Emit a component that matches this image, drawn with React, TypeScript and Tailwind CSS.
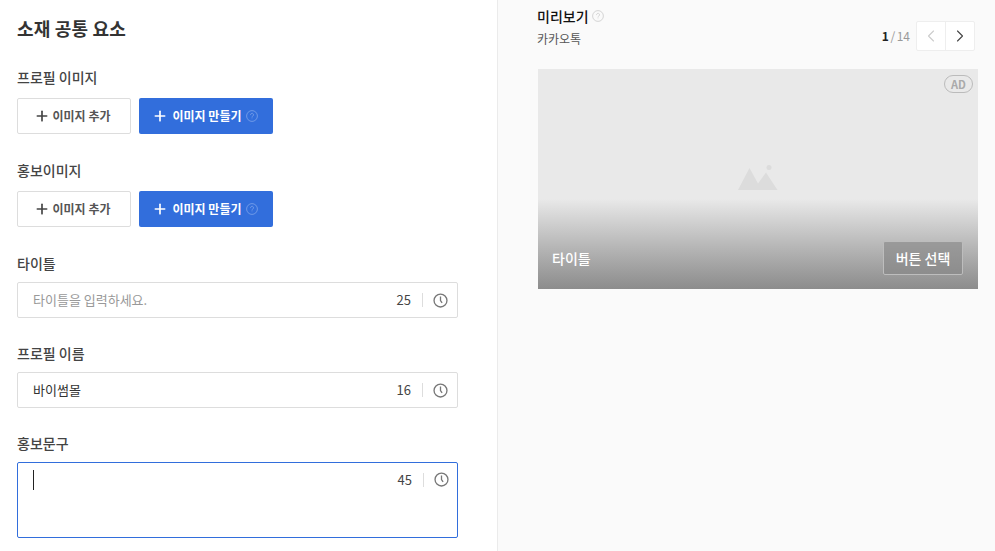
import { ChevronLeft, ChevronRight, Plus } from "lucide-react";

const fontStack = { fontFamily: '"Noto Sans CJK KR", "Noto Sans", sans-serif' };

function HelpIcon({ className }: { className?: string }) {
  return (
    <svg viewBox="0 0 12 12" className={className} fill="none" stroke="currentColor" strokeWidth="0.8">
      <circle cx="6" cy="6" r="5.4" />
      <path d="M4.5 4.7a1.5 1.5 0 1 1 2.3 1.3c-.5.3-.8.6-.8 1.2" strokeLinecap="round" />
      <circle cx="6" cy="8.8" r="0.4" fill="currentColor" stroke="none" />
    </svg>
  );
}

function ClockIcon() {
  return (
    <svg viewBox="0 0 16 16" className="h-[15px] w-[15px] text-[#777]" fill="none" stroke="currentColor" strokeWidth="1.4">
      <circle cx="8" cy="8" r="6.9" />
      <path d="M8 3.6V8l1.7 2.6" />
    </svg>
  );
}

function ImageButtons() {
  return (
    <div className="flex gap-2">
      <button className="flex h-9 w-[114px] items-center justify-center gap-[3px] rounded-[2px] border border-[#ddd] bg-white pr-[4px] text-[12px] font-bold text-[#555]">
        <Plus className="h-4 w-4 text-[#444]" strokeWidth={2.5} />
        이미지 추가
      </button>
      <button className="flex h-9 w-[134px] items-center justify-center gap-[5px] rounded-[2px] bg-[#326edc] pr-[2px] text-[12px] font-bold text-white">
        <Plus className="h-4 w-4" strokeWidth={2.5} />
        이미지 만들기
        <HelpIcon className="h-3 w-3 text-[#7fa5ea]" />
      </button>
    </div>
  );
}

function Counter({ value }: { value: number }) {
  return (
    <div className="flex items-center">
      <span className="text-[13px] text-[#444]">{value}</span>
      <span className="ml-[11px] mr-[10px] h-[14px] w-px bg-[#ddd]" />
      <ClockIcon />
    </div>
  );
}

export default function App() {
  return (
    <div className="flex h-[551px] w-[995px] overflow-hidden bg-white" style={fontStack}>
      <div className="w-[498px] shrink-0 border-r border-[#ebebeb] pl-[17px] pr-[39px]">
        <h2 className="pt-[15px] text-[18px] font-bold leading-[26px] tracking-[0.2px] text-[#333]">소재 공통 요소</h2>

        <h3 className="mt-[26px] text-[14px] font-medium leading-[20px] text-[#444]">프로필 이미지</h3>
        <div className="mt-[11px]">
          <ImageButtons />
        </div>

        <h3 className="mt-[26px] text-[14px] font-medium leading-[20px] text-[#444]">홍보이미지</h3>
        <div className="mt-[11px]">
          <ImageButtons />
        </div>

        <h3 className="mt-[26px] text-[14px] font-medium leading-[20px] text-[#444]">타이틀</h3>
        <div className="mt-[9px] flex h-9 items-center justify-between rounded-[2px] border border-[#ddd] pl-[15px] pr-[9px]">
          <span className="text-[13px] text-[#999]">타이틀을 입력하세요.</span>
          <Counter value={25} />
        </div>

        <h3 className="mt-[25px] text-[14px] font-medium leading-[20px] text-[#444]">프로필 이름</h3>
        <div className="mt-[9px] flex h-9 items-center justify-between rounded-[2px] border border-[#ddd] pl-[15px] pr-[9px]">
          <span className="text-[13px] text-[#333]">바이썸몰</span>
          <Counter value={16} />
        </div>

        <h3 className="mt-[25px] text-[14px] font-medium leading-[20px] text-[#444]">홍보문구</h3>
        <div className="mt-[9px] flex h-[76px] items-start justify-between rounded-[2px] border border-[#326edc] pl-[15px] pr-[8px] pt-[7px]">
          <span className="h-[20px] w-px bg-[#222]" />
          <Counter value={45} />
        </div>
      </div>

      <div className="min-w-0 flex-1 bg-[#fafafa] pl-[39px] pr-[20px]">
        <div className="flex items-start justify-between">
          <div>
            <div className="flex items-center gap-[3px] pt-[6px]">
              <span className="text-[14px] font-medium leading-[20px] text-[#111]">미리보기</span>
              <HelpIcon className="h-3 w-3 text-[#ccc]" />
            </div>
            <p className="mt-[4px] text-[12px] leading-[18px] text-[#555]">카카오톡</p>
          </div>
          <div className="mt-[21px] flex items-center gap-[6px]">
            <span className="text-[12px] text-[#999]">
              <b className="font-bold text-[#222]">1</b>
              <span className="mx-[1.5px]">/</span>14
            </span>
            <div className="flex h-[30px] w-[59px] rounded-[2px] border border-[#eee] bg-white">
              <span className="flex flex-1 items-center justify-center border-r border-[#eee]">
                <ChevronLeft className="h-5 w-5 text-[#ccc]" strokeWidth={1.3} />
              </span>
              <span className="flex flex-1 items-center justify-center">
                <ChevronRight className="h-5 w-5 text-[#444]" strokeWidth={1.3} />
              </span>
            </div>
          </div>
        </div>

        <div className="relative ml-px mt-[18px] flex h-[220px] w-[440px] items-center justify-center bg-[#e9e9e9]">
          <svg viewBox="0 0 40 26" className="mb-[2px] h-[26px] w-[40px] text-[#dcdcdc]" fill="currentColor">
            <path d="M0 25 11.5 3 20 18.5 28 7.5 39.5 25Z" />
            <circle cx="31" cy="2.5" r="2.5" />
          </svg>
          <span className="absolute right-[5px] top-[6px] flex h-[18px] w-[29px] items-center justify-center rounded-full border border-[#bbb] text-[11px] font-bold text-[#aaa]">
            AD
          </span>
          <div className="absolute inset-x-0 bottom-0 flex h-[90px] items-end justify-between bg-gradient-to-b from-[#e9e9e9] to-[#8c8c8c] pb-[14px] pl-[14px] pr-[15px]">
            <span className="pb-[7px] text-[14px] font-medium leading-[20px] text-white">타이틀</span>
            <span className="flex h-[34px] w-[80px] items-center justify-center rounded-[2px] border border-[#bdbdbd] bg-[#848484]/60 text-[14px] font-medium text-white">
              버튼 선택
            </span>
          </div>
        </div>
      </div>
    </div>
  );
}
